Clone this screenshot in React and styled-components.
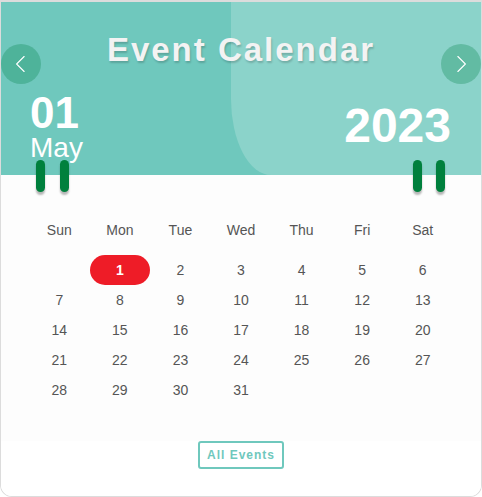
import React from "react";
import styled, { createGlobalStyle } from "styled-components";

const Global = createGlobalStyle`
  html, body { margin: 0; padding: 0; background: #ffffff; }
  body { font-family: "Liberation Sans", Arial, sans-serif; }
  * { box-sizing: border-box; }
`;

const Card = styled.div`
  position: relative;
  width: 482px;
  height: 497px;
  border: 1px solid #dcdcdc;
  border-top-width: 2px;
  border-radius: 0 0 12px 12px;
  overflow: hidden;
  display: flex;
  flex-direction: column;
  background: #ffffff;
`;

const Header = styled.header`
  position: relative;
  height: 173px;
  flex: none;
  background: #6fc8bd;
  padding: 28px 29px 0 29px;
  display: flex;
  flex-direction: column;
  overflow: hidden;
  &::before {
    content: "";
    position: absolute;
    left: 230px;
    top: 0;
    right: 0;
    bottom: 0;
    background: #8bd3ca;
    border-bottom-left-radius: 40px 76px;
  }
`;

const Title = styled.h1`
  position: relative;
  margin: 0;
  text-align: center;
  font-size: 33px;
  line-height: 40px;
  font-weight: 700;
  letter-spacing: 2px;
  color: #f3f3f3;
  text-shadow: 1px 2px 2px rgba(0, 0, 0, 0.18);
`;

const NavButton = styled.button`
  position: absolute;
  top: 42px;
  ${(p) => (p.$side === "left" ? "left: 0;" : "right: 0;")}
  width: 40px;
  height: 40px;
  border: none;
  border-radius: 50%;
  padding: 0;
  background: rgba(0, 128, 70, 0.29);
  display: flex;
  align-items: center;
  justify-content: center;
  cursor: pointer;
`;

const DateRow = styled.div`
  position: relative;
  margin-top: 22px;
  display: flex;
  justify-content: space-between;
  align-items: flex-start;
  color: #ffffff;
`;

const DayBlock = styled.div`
  display: flex;
  flex-direction: column;
`;

const DayNum = styled.div`
  font-size: 44px;
  line-height: 42px;
  font-weight: 700;
`;

const MonthName = styled.div`
  font-size: 28px;
  line-height: 28px;
`;

const Year = styled.div`
  margin-top: 10px;
  margin-right: 1px;
  font-size: 48px;
  line-height: 48px;
  font-weight: 700;
`;

const Body = styled.section`
  position: relative;
  background: #fdfdfd;
  padding: 40px 28px 36px 28px;
  flex: none;
`;

const Ring = styled.span`
  position: absolute;
  top: -15px;
  left: ${(p) => p.$x}px;
  width: 9px;
  height: 32px;
  border-radius: 5px;
  background: #00803d;
  box-shadow: 0 3px 2px rgba(0, 0, 0, 0.28);
`;

const Grid = styled.div`
  display: grid;
  grid-template-columns: repeat(7, 1fr);
  grid-auto-rows: 30px;
`;

const WeekHead = styled(Grid)`
  margin-bottom: 10px;
`;

const Cell = styled.div`
  display: flex;
  align-items: center;
  justify-content: center;
  font-size: 14px;
  color: #555555;
`;

const Selected = styled(Cell)`
  background: #ee1c27;
  color: #ffffff;
  font-weight: 700;
  border-radius: 15px;
`;

const Footer = styled.footer`
  flex: 1;
  display: flex;
  justify-content: center;
  align-items: flex-start;
  background: #ffffff;
`;

const EventsButton = styled.button`
  height: 28px;
  padding: 0 7px;
  border: 2px solid #6fc8bd;
  border-radius: 3px;
  background: #ffffff;
  color: #6fc8bd;
  font-family: "Liberation Sans", Arial, sans-serif;
  font-size: 12px;
  font-weight: 700;
  letter-spacing: 1px;
  cursor: pointer;
`;

const Chevron = ({ dir }) => (
  <svg width="30" height="30" viewBox="0 0 24 24" fill="none">
    <path
      d={dir === "left" ? "M14.5 18 8.5 12 14.5 6" : "M9.5 18 15.5 12 9.5 6"}
      stroke="#ffffff"
      strokeWidth="0.9"
      strokeLinecap="round"
      strokeLinejoin="round"
    />
  </svg>
);

const weekdays = ["Sun", "Mon", "Tue", "Wed", "Thu", "Fri", "Sat"];
const days = [null, ...Array.from({ length: 31 }, (_, i) => i + 1)];

export default function App() {
  return (
    <>
      <Global />
      <Card>
        <Header>
          <Title>Event Calendar</Title>
          <DateRow>
            <DayBlock>
              <DayNum>01</DayNum>
              <MonthName>May</MonthName>
            </DayBlock>
            <Year>2023</Year>
          </DateRow>
          <NavButton $side="left" aria-label="Previous">
            <Chevron dir="left" />
          </NavButton>
          <NavButton $side="right" aria-label="Next">
            <Chevron dir="right" />
          </NavButton>
        </Header>
        <Body>
          <Ring $x={35} />
          <Ring $x={59} />
          <Ring $x={412} />
          <Ring $x={435} />
          <WeekHead>
            {weekdays.map((d) => (
              <Cell key={d}>{d}</Cell>
            ))}
          </WeekHead>
          <Grid>
            {days.map((d, i) =>
              d === 1 ? (
                <Selected key={i}>{d}</Selected>
              ) : (
                <Cell key={i}>{d ?? ""}</Cell>
              )
            )}
          </Grid>
        </Body>
        <Footer>
          <EventsButton>All Events</EventsButton>
        </Footer>
      </Card>
    </>
  );
}
